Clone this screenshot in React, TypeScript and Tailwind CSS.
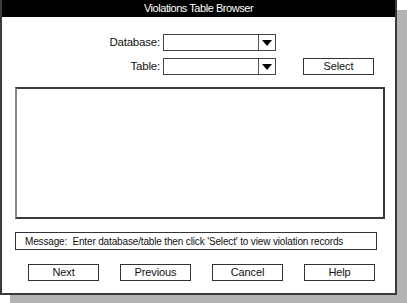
const FONT = "font-['Liberation_Sans',Arial,sans-serif]"

function Combo() {
  return (
    <div className="flex w-[113px] h-[17px] border border-[#444] bg-white">
      <div className="flex-1" />
      <div className="w-[17px] border-l border-[#555] flex items-center justify-center">
        <svg width="10" height="6" viewBox="0 0 10 6">
          <path d="M0 0 H10 L5 6 Z" fill="#000" />
        </svg>
      </div>
    </div>
  )
}

function Button({ label, className = "" }: { label: string; className?: string }) {
  return (
    <div className={`w-[71px] h-[17px] border border-[#333] bg-white flex items-center justify-center text-[11px] tracking-[-0.1px] leading-none text-[#111] ${className}`}>
      {label}
    </div>
  )
}

export default function App() {
  return (
    <div className={`w-[407px] h-[303px] bg-white ${FONT}`}>
      <div className="w-[397px] h-[295px] border-x-2 border-b-2 border-[#3a3a3a] bg-white shadow-[10px_10px_0_#b3b3b3] flex flex-col">
        <div className="h-[17px] bg-black text-white text-[11px] tracking-[-0.45px] flex items-center justify-center">
          Violations Table Browser
        </div>

        <div className="mt-[17px] flex items-center h-[17px]">
          <div className="w-[159px] text-right text-[11.5px] tracking-[-0.2px] pr-[1px] text-[#111]">Database:</div>
          <div className="ml-[2px]"><Combo /></div>
        </div>

        <div className="mt-[7px] flex items-center h-[17px]">
          <div className="w-[159px] text-right text-[11.5px] tracking-[-0.2px] pr-[1px] text-[#111]">Table:</div>
          <div className="ml-[2px]"><Combo /></div>
          <Button label="Select" className="ml-[27px]" />
        </div>

        <div className="mt-[12px] ml-[13px] w-[370px] h-[132px] border-2 border-[#3a3a3a] border-l-[#888] bg-white" />

        <div className="mt-[13px] ml-[13px] w-[362px] h-[18px] border border-[#333] flex items-center pl-[9px] text-[10px] tracking-[-0.15px] text-[#111] whitespace-nowrap">
          Message:&nbsp; Enter database/table then click 'Select' to view violation records
        </div>

        <div className="mt-[14px] ml-[26px] flex gap-[21px]">
          <Button label="Next" />
          <Button label="Previous" />
          <Button label="Cancel" />
          <Button label="Help" />
        </div>
      </div>
    </div>
  )
}
